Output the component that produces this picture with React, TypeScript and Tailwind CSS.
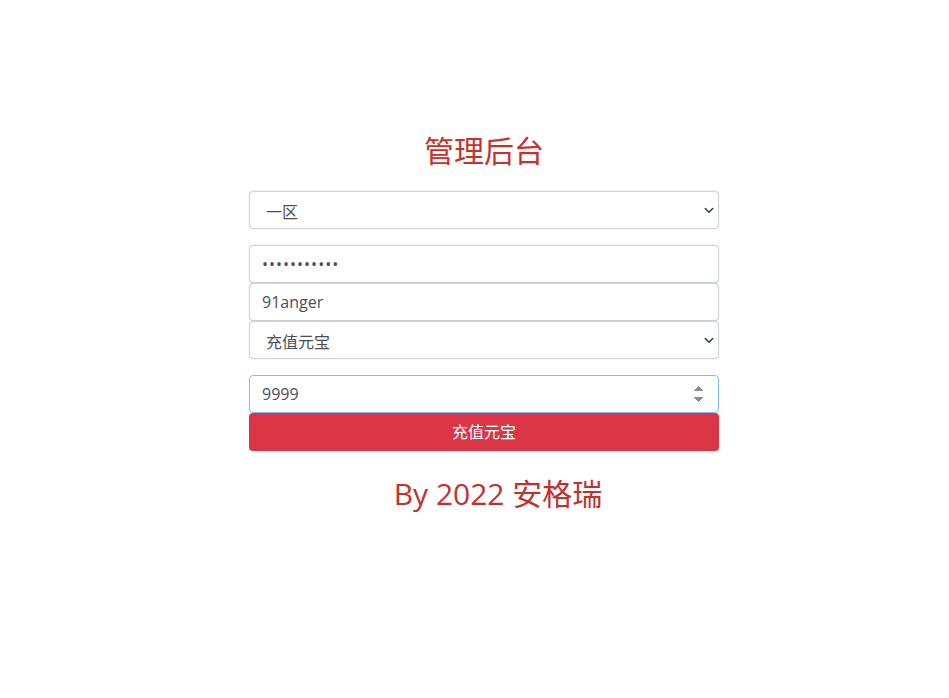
import React from "react";

const font = { fontFamily: '"Open Sans", "Noto Sans CJK SC", sans-serif' };

function Chevron() {
  return (
    <svg
      className="pointer-events-none absolute right-[4px] top-1/2 -translate-y-1/2"
      width="12"
      height="12"
      viewBox="0 0 16 16"
    >
      <path d="M3 6l5 5 5-5" fill="none" stroke="#343a40" strokeWidth="2" strokeLinecap="round" strokeLinejoin="round" />
    </svg>
  );
}

function Select({ value, options }: { value: string; options: string[] }) {
  return (
    <div className="relative">
      <select
        defaultValue={value}
        className="h-[38px] w-full appearance-none rounded-[4px] border border-[#ced4da] bg-white pl-[16px] pr-8 pt-[3px] text-[16px] text-[#495057] shadow-[0_0_2px_rgba(0,0,0,0.12)] outline-none"
        style={font}
      >
        {options.map((o) => (
          <option key={o}>{o}</option>
        ))}
      </select>
      <Chevron />
    </div>
  );
}

const baseInput =
  "h-[38px] w-full rounded-[4px] border bg-white px-[12px] text-[16px] text-[#495057] outline-none";
const inputCls = baseInput + " border-[#ced4da] shadow-[0_0_2px_rgba(0,0,0,0.12)]";
const focusCls = baseInput + " border-[#80bdff]";

export default function App() {
  return (
    <div className="min-h-[698px] w-full bg-white pl-[19px]" style={font}>
      <div className="mx-auto flex w-[470px] flex-col pt-[130px]">
        <h1 className="text-center text-[30px] leading-[42px] text-[#c9302c]">管理后台</h1>
        <div className="mt-[19px]">
          <Select value="一区" options={["一区", "二区"]} />
        </div>
        <div className="mt-[16px]">
          <input
            type="password"
            defaultValue="12345678901"
            className={inputCls + " tracking-[1px]"}
            style={font}
          />
        </div>
        <input type="text" defaultValue="91anger" className={inputCls} style={font} />
        <Select value="充值元宝" options={["充值元宝"]} />
        <div className="mt-[16px]">
          <input type="number" defaultValue="9999" autoFocus className={focusCls} style={font} />
        </div>
        <button
          className="h-[38px] w-full rounded-[4px] bg-[#dc3545] text-[16px] text-white"
          style={font}
        >
          充值元宝
        </button>
        <div className="mt-[22px] pl-[28px] text-center text-[30px] leading-[42px] text-[#c0322e]">
          By 2022 安格瑞
        </div>
      </div>
    </div>
  );
}
